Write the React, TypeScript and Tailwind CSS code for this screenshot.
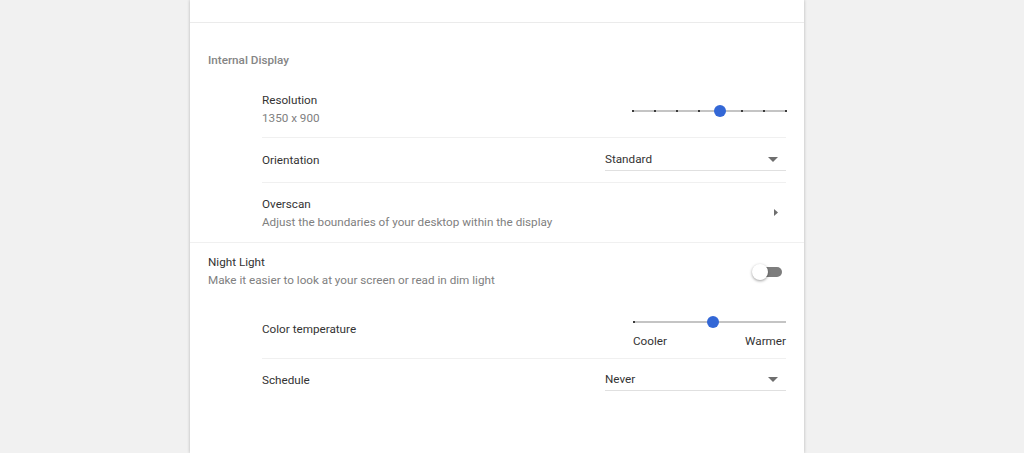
import React from "react";

const font = { fontFamily: "Roboto, 'Noto Sans', Arial, sans-serif" };

function Slider({ steps, value, ticks }: { steps: number; value: number; ticks: boolean }) {
  const pos = (value / (steps - 1)) * 100;
  return (
    <div className="relative w-[153px] h-[12px]">
      <div className="absolute left-0 right-0 top-[5px] h-[2px] bg-[#c4c4c4]" />
      {ticks ? (
        Array.from({ length: steps }).map((_, i) => (
          <div
            key={i}
            className="absolute top-[5px] w-[2px] h-[2px] bg-[#3c3c3c] -translate-x-1/2"
            style={{ left: `${(i / (steps - 1)) * 100}%` }}
          />
        ))
      ) : (
        <div className="absolute top-[5px] left-0 w-[2px] h-[2px] bg-[#3c3c3c]" />
      )}
      <div
        className="absolute top-0 w-[12px] h-[12px] rounded-full bg-[#3367d6] -translate-x-1/2"
        style={{ left: `${pos}%` }}
      />
    </div>
  );
}

function Dropdown({ value }: { value: string }) {
  return (
    <div className="w-[181px] h-[22px] flex items-center justify-between border-b border-[#e0e0e0]">
      <span className="text-[11.7px] text-[#333]">{value}</span>
      <svg width="10" height="5" viewBox="0 0 10 5" className="mr-[8px]">
        <path d="M0 0h10L5 5z" fill="#6e6e6e" />
      </svg>
    </div>
  );
}

export default function App() {
  return (
    <div className="h-[453px] bg-[#f1f1f1] overflow-hidden" style={font}>
      <div className="ml-[190px] w-[614px] h-full bg-white shadow-[0_0_3px_rgba(0,0,0,0.25)] flex flex-col">
        <div className="h-[23px] border-b border-[#ebebeb]" />

        {/* Internal Display */}
        <div className="h-[57px] px-[18px] flex items-center pt-[19px]">
          <span className="text-[11.7px] font-medium text-[#858585]">Internal Display</span>
        </div>

        <div className="pl-[72px] pr-[18px]">
          <div className="h-[58px] flex items-center justify-between border-b border-[#f0f0f0]">
            <div className="leading-[18px] text-[11.7px]">
              <div className="text-[#333]">Resolution</div>
              <div className="text-[#808080]">1350 x 900</div>
            </div>
            <div className="pt-[4px] pl-[1px]">
              <Slider steps={8} value={4} ticks />
            </div>
          </div>
          <div className="h-[45px] flex items-center justify-between border-b border-[#f0f0f0]">
            <span className="text-[11.7px] text-[#333] pt-[1px]">Orientation</span>
            <Dropdown value="Standard" />
          </div>
          <div className="h-[59px] flex items-center justify-between">
            <div className="leading-[18px] text-[11.7px]">
              <div className="text-[#333]">Overscan</div>
              <div className="text-[#808080]">Adjust the boundaries of your desktop within the display</div>
            </div>
            <svg width="4" height="7" viewBox="0 0 4 7" className="mr-[8px]">
              <path d="M0 0l4 3.5-4 3.5z" fill="#6e6e6e" />
            </svg>
          </div>
        </div>

        {/* Night Light */}
        <div className="h-[58px] px-[18px] flex items-center justify-between border-t border-[#f0f0f0]">
          <div className="leading-[18px] text-[11.7px] pb-[2px]">
            <div className="text-[#333]">Night Light</div>
            <div className="text-[#808080]">Make it easier to look at your screen or read in dim light</div>
          </div>
          <div className="relative w-[30px] h-[16px] mr-[4px]">
            <div className="absolute left-[3px] right-0 top-[3px] h-[10px] rounded-full bg-[#7d7d7d]" />
            <div className="absolute left-0 top-0 w-[16px] h-[16px] rounded-full bg-white shadow-[0_1px_3px_rgba(0,0,0,0.4)]" />
          </div>
        </div>

        <div className="pl-[72px] pr-[18px]">
          <div className="h-[59px] flex items-center justify-between border-b border-[#f0f0f0]">
            <span className="text-[11.7px] text-[#333] pt-[1px]">Color temperature</span>
            <div className="flex flex-col pt-[5px] pl-[1px]">
              <Slider steps={3} value={1.04} ticks={false} />
              <div className="flex justify-between text-[11.7px] text-[#333] mt-[6px] leading-[14px]">
                <span>Cooler</span>
                <span>Warmer</span>
              </div>
            </div>
          </div>
          <div className="h-[42px] flex items-center justify-between">
            <span className="text-[11.7px] text-[#333] pt-[1px]">Schedule</span>
            <Dropdown value="Never" />
          </div>
        </div>
      </div>
    </div>
  );
}
